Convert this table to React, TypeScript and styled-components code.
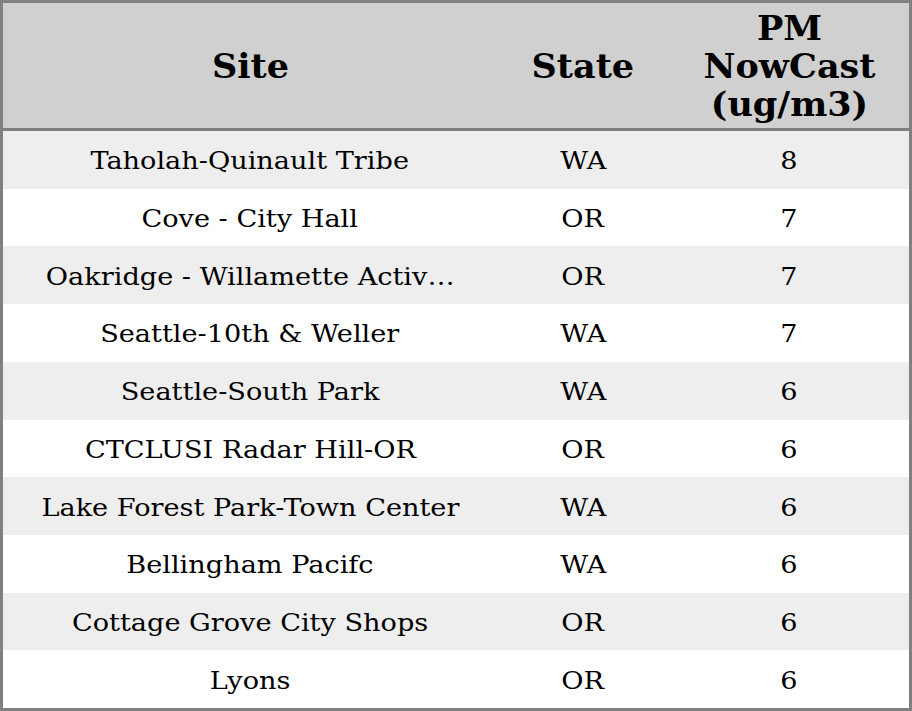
import { createGlobalStyle, styled } from 'styled-components';

interface SiteReading {
  site: string;
  state: string;
  value: number;
}

const readings: SiteReading[] = [
  { site: 'Taholah-Quinault Tribe', state: 'WA', value: 8 },
  { site: 'Cove - City Hall', state: 'OR', value: 7 },
  { site: 'Oakridge - Willamette Activ…', state: 'OR', value: 7 },
  { site: 'Seattle-10th & Weller', state: 'WA', value: 7 },
  { site: 'Seattle-South Park', state: 'WA', value: 6 },
  { site: 'CTCLUSI Radar Hill-OR', state: 'OR', value: 6 },
  { site: 'Lake Forest Park-Town Center', state: 'WA', value: 6 },
  { site: 'Bellingham Pacifc', state: 'WA', value: 6 },
  { site: 'Cottage Grove City Shops', state: 'OR', value: 6 },
  { site: 'Lyons', state: 'OR', value: 6 },
];

const App = () => {
  return (
    <>
      <GlobalStyle />
      <Table>
        <Header>
          <HeadCell>
            <HeadText>Site</HeadText>
          </HeadCell>
          <HeadCell>
            <HeadText>State</HeadText>
          </HeadCell>
          <HeadCell>
            <HeadText>
              PM
              <br />
              NowCast
              <br />
              (ug/m3)
            </HeadText>
          </HeadCell>
        </Header>
        {readings.map((r, i) => (
          <Row key={r.site} $shaded={i % 2 === 0}>
            <Cell>
              <CellText>{r.site}</CellText>
            </Cell>
            <Cell>
              <CellText>{r.state}</CellText>
            </Cell>
            <Cell>
              <CellText>{r.value}</CellText>
            </Cell>
          </Row>
        ))}
      </Table>
    </>
  );
};

const GlobalStyle = createGlobalStyle`
  html, body {
    margin: 0;
    padding: 0;
    background: #ffffff;
  }
  body {
    font-family: 'DejaVu Serif', 'Liberation Serif', serif;
    color: #000;
  }
`;

const Table = styled.div`
  width: 912px;
  height: 711px;
  box-sizing: border-box;
  border: 3px solid #808080;
  display: flex;
  flex-direction: column;
  overflow: hidden;
`;

const columns = '494px 172px 1fr';

const Header = styled.div`
  display: grid;
  grid-template-columns: ${columns};
  height: 125px;
  flex-shrink: 0;
  background-color: #d0d0d0;
  border-bottom: 3px solid #808080;
`;

const HeadCell = styled.div`
  display: flex;
  align-items: center;
  justify-content: center;
  text-align: center;
  font-size: 34px;
  font-weight: bold;
  line-height: 38px;
`;

const HeadText = styled.span`
  display: inline-block;
  transform: scaleX(1.03);
`;

const Row = styled.div<{ $shaded: boolean }>`
  display: grid;
  grid-template-columns: ${columns};
  flex: 1;
  background-color: ${(p) => (p.$shaded ? '#eeeeee' : '#ffffff')};
`;

const Cell = styled.div`
  display: flex;
  align-items: center;
  justify-content: center;
  padding-top: 2px;
  font-size: 25px;
  white-space: nowrap;
  overflow: hidden;
`;

const CellText = styled.span`
  display: inline-block;
  transform: scaleX(1.086);
`;

export default App;
